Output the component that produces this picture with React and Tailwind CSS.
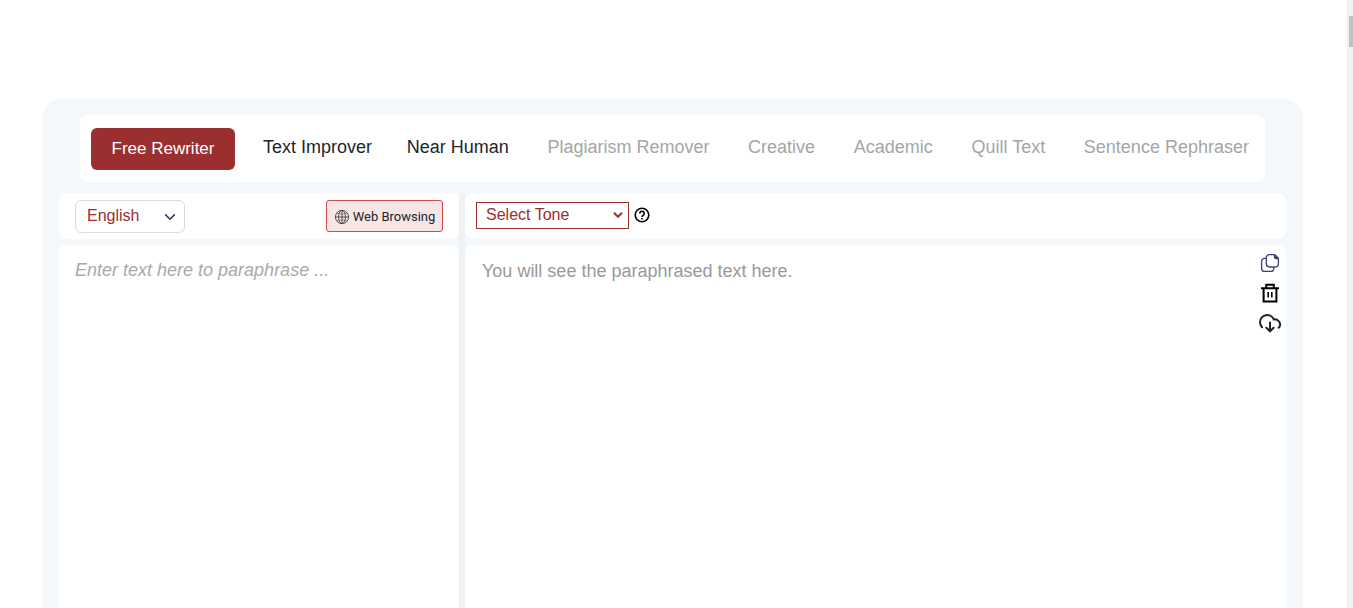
import { useState } from "react";

const tabs = [
  { name: "Text Improver", locked: false },
  { name: "Near Human", locked: false },
  { name: "Plagiarism Remover", locked: true },
  { name: "Creative", locked: true },
  { name: "Academic", locked: true },
  { name: "Quill Text", locked: true },
  { name: "Sentence Rephraser", locked: true },
];

const GlobeIcon = () => (
  <svg viewBox="0 0 16 16" className="h-4 w-4 shrink-0" fill="none" stroke="#4a4040" strokeWidth="0.9">
    <circle cx="8" cy="8" r="6.6" />
    <ellipse cx="8" cy="8" rx="3.4" ry="6.6" />
    <path d="M8 1.4v13.2M1.4 8h13.2" />
    <path d="M2.8 4.2q5.2 1.8 10.4 0M2.8 11.8q5.2-1.8 10.4 0" strokeWidth="0.5" />
  </svg>
);

const HelpIcon = () => (
  <svg viewBox="0 0 16 16" className="h-4 w-4" fill="none" stroke="#000" strokeWidth="1.6">
    <circle cx="8" cy="8" r="6.8" />
    <path d="M5.8 6.4a2.2 2.2 0 1 1 3.4 1.9C8.4 8.8 8 9.1 8 9.9" />
    <path d="M8 10.9v1.6" />
  </svg>
);

const CopyIcon = () => (
  <svg viewBox="0 0 20 20" className="h-5 w-5" fill="none" stroke="#413f77" strokeWidth="1.3">
    <path d="M9.5 1.6h5.3l3.6 3.6v5.6a3.2 3.2 0 0 1-3.2 3.2H9.5a3.2 3.2 0 0 1-3.2-3.2v-6a3.2 3.2 0 0 1 3.2-3.2z" />
    <path d="M14.4 1.8v2.2a1.5 1.5 0 0 0 1.5 1.5h2.3" fill="#413f77" />
    <path d="M6.2 5.4H4.6a3 3 0 0 0-3 3v7a3 3 0 0 0 3 3h6.2a3 3 0 0 0 3-3v-1.2" />
  </svg>
);

const TrashIcon = () => (
  <svg viewBox="0 0 20 20" className="h-5 w-5" fill="none" stroke="#000" strokeWidth="2">
    <path d="M1 5.2h18M6.2 5V1.8h7.6V5M3.6 5.2v13.2h12.8V5.2" />
    <path d="M8.2 9v5.4M11.8 9v5.4" strokeWidth="1.6" />
  </svg>
);

const CloudIcon = () => (
  <svg viewBox="0 0 24 20" className="h-5 w-6" fill="none" stroke="#222" strokeWidth="2" strokeLinecap="round">
    <path d="M4 14.2A6.9 6.9 0 0 1 2 9.2a7.2 7.2 0 0 1 13.8-2.8 5.6 5.6 0 0 1 6.4 4.9c0 1.6-.5 2.6-1.5 3.4" />
    <path d="M12 9.6v8.6M8.4 14.8l3.6 3.6 3.6-3.6" />
  </svg>
);

const App = () => {
  const [language, setLanguage] = useState("English");
  const [tone, setTone] = useState("");
  const [text, setText] = useState("");

  return (
    <div className="flex min-h-screen bg-white font-['Liberation_Sans',Arial,sans-serif]">
      <main className="flex min-w-0 flex-1 flex-col pt-[99px] pr-11 pl-[42px]">
        <section className="flex flex-1 flex-col rounded-t-[20px] bg-[#f4f8fb] px-[17px] pt-4">
          {/* Modes */}
          <nav className="mr-[21px] ml-[21px] flex items-center rounded-lg bg-white pt-[13px] pr-4 pb-3 pl-[11px] leading-6 whitespace-nowrap">
            <button className="h-[42px] w-36 rounded-md bg-[#9b2f2f] text-[17px] text-white">
              Free Rewriter
            </button>
            <div className="ml-7 flex flex-1 items-center justify-between text-lg leading-6">
              {tabs.map((tab) => (
                <a
                  key={tab.name}
                  href="#"
                  className={tab.locked ? "pb-1 pl-1 text-[#a5a5a5]" : "pb-1 text-[#212529]"}
                >
                  {tab.name}
                </a>
              ))}
            </div>
          </nav>

          <div className="mt-[11px] flex flex-1">
            {/* Input side */}
            <div className="flex w-[400px] flex-col gap-1.5">
              <div className="flex h-[46px] items-center justify-between rounded-lg bg-white px-4">
                <div className="relative">
                  <select
                    aria-label="Language"
                    value={language}
                    onChange={(e) => setLanguage(e.target.value)}
                    className="block h-[33px] w-[110px] appearance-none rounded-md border border-[#d9dadc] bg-white pr-8 pl-[11px] text-base leading-6 text-[#9b2f2f]"
                  >
                    <option>English</option>
                    <option>Spanish</option>
                    <option>French</option>
                  </select>
                  <svg viewBox="0 0 12 8" className="pointer-events-none absolute top-[13px] right-[9px] h-2 w-3" fill="none" stroke="#35345f" strokeWidth="1.5">
                    <path d="M1.2 1.4L6 6.2l4.8-4.8" />
                  </svg>
                </div>
                <button className="flex h-8 w-[117px] items-center justify-center gap-[3px] rounded-[3px] border border-[#cf4a4a] bg-[#f7e6e6] pt-0.5 font-[Roboto,sans-serif] text-[13px] whitespace-nowrap text-[#212529]">
                  <GlobeIcon />
                  Web Browsing
                </button>
              </div>
              <textarea
                aria-label="Text to paraphrase"
                value={text}
                onChange={(e) => setText(e.target.value)}
                placeholder="Enter text here to paraphrase ..."
                className="flex-1 resize-none rounded-t-lg bg-white px-4 py-3 text-lg leading-[26px] text-[#212529] outline-none placeholder:text-[#a9a9a9] placeholder:italic"
              />
            </div>

            <div className="w-1.5 bg-[#edf2f6]" />

            {/* Output side */}
            <div className="flex min-w-0 flex-1 flex-col gap-1.5">
              <div className="flex h-[46px] items-center gap-[5px] rounded-lg bg-white px-[11px] pb-0.5">
                <div className="relative">
                  <select
                    aria-label="Tone"
                    value={tone}
                    onChange={(e) => setTone(e.target.value)}
                    className="block h-[27px] w-[153px] appearance-none border border-[#9b2f2f] bg-white pr-6 pl-[9px] text-base leading-6 text-[#9b2f2f]"
                  >
                    <option value="">Select Tone</option>
                    <option>Formal</option>
                    <option>Casual</option>
                  </select>
                  <svg viewBox="0 0 10 8" className="pointer-events-none absolute top-[9px] right-1.5 h-2 w-2.5" fill="none" stroke="#9b2f2f" strokeWidth="2">
                    <path d="M1 1.8l4 4 4-4" />
                  </svg>
                </div>
                <button aria-label="About tones">
                  <HelpIcon />
                </button>
              </div>
              <div className="flex flex-1 justify-between rounded-t-lg bg-white pr-1 pl-[17px]">
                <p className="py-[13px] text-lg leading-[26px] text-[#999]">
                  You will see the paraphrased text here.
                </p>
                <div className="flex flex-col items-center gap-2.5 pt-2">
                  <button aria-label="Copy" className="block">
                    <CopyIcon />
                  </button>
                  <button aria-label="Delete" className="block">
                    <TrashIcon />
                  </button>
                  <button aria-label="Download" className="block">
                    <CloudIcon />
                  </button>
                </div>
              </div>
            </div>
          </div>
        </section>
      </main>

      {/* Scroll track */}
      <div className="w-1.5 bg-[#f1f1f1] pt-4 pl-0.5">
        <div className="h-[31px] bg-[#c1c1c1]" />
      </div>
    </div>
  );
};

export default App;
